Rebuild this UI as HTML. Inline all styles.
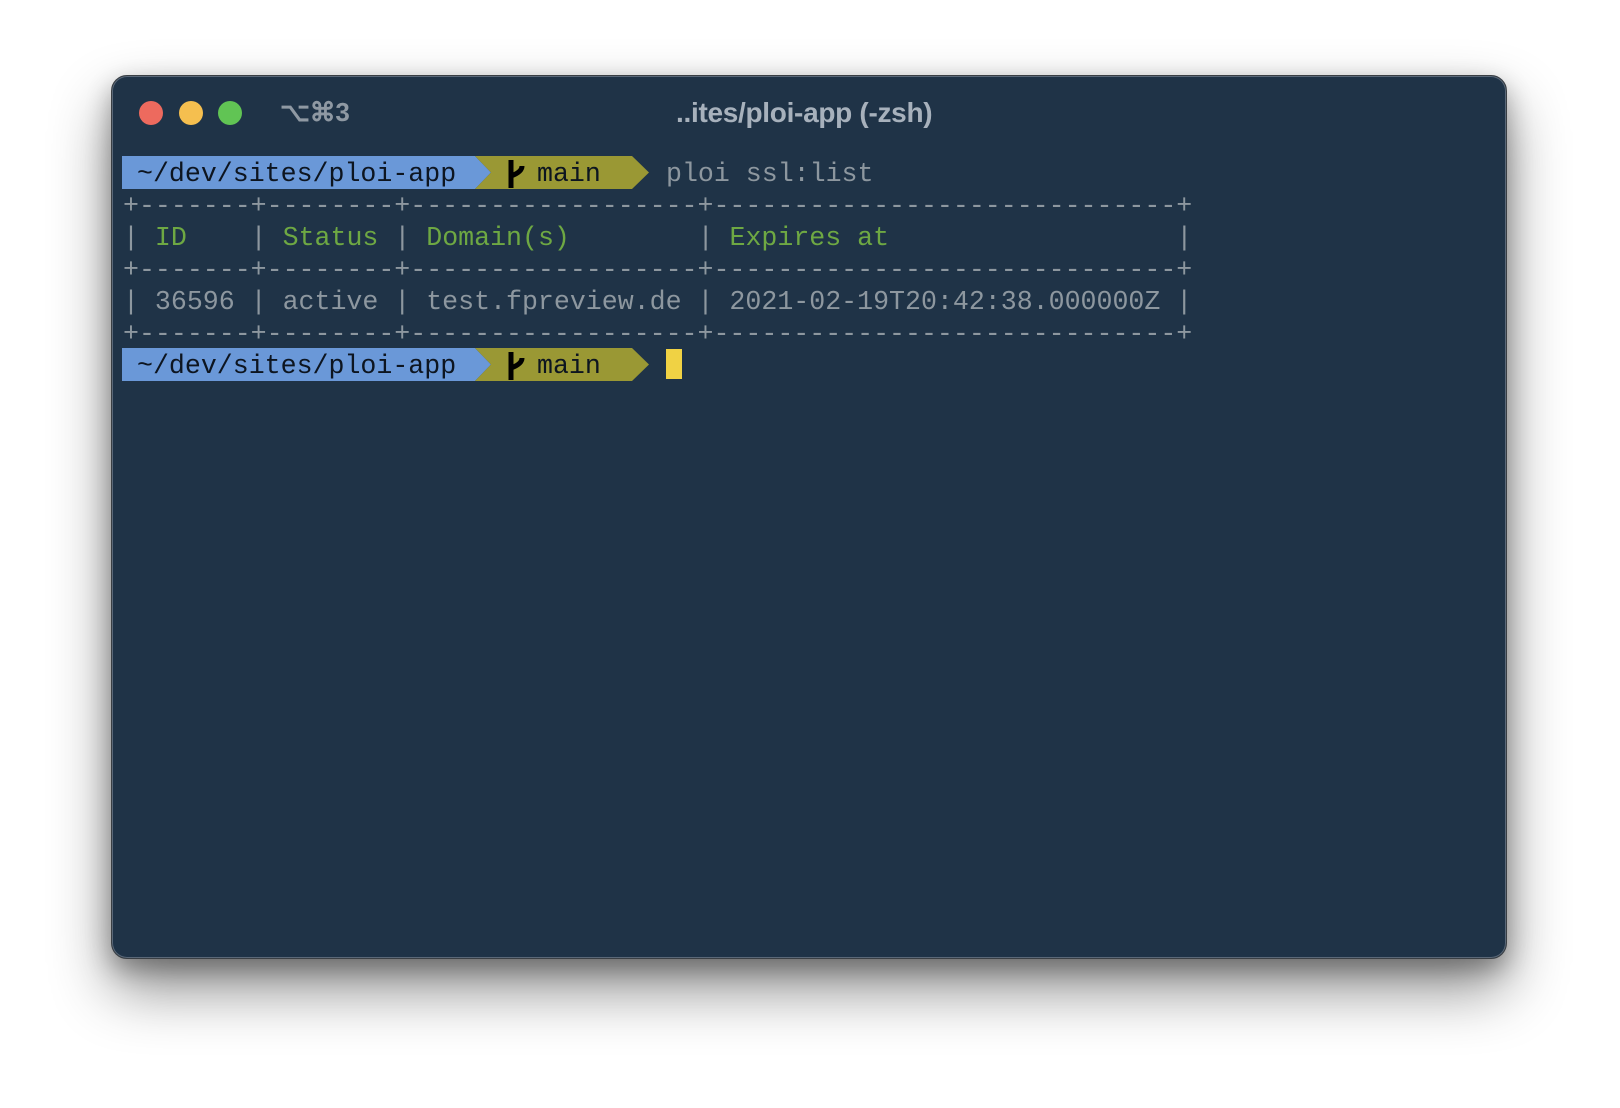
<!DOCTYPE html>
<html><head><style>
html,body{margin:0;padding:0;background:#fff;width:1620px;height:1108px;overflow:hidden}
.win{position:absolute;left:111px;top:75px;width:1396px;height:884px;background:#1f3347;border-radius:16px;border:1px solid #3a3f44;box-shadow:inset 0 0 0 1px #5a6878,0 30px 60px rgba(0,0,0,.45),0 10px 25px rgba(0,0,0,.3);box-sizing:border-box}
.dot{position:absolute;top:101px;width:24px;height:24px;border-radius:50%}
.t{position:absolute;font-family:"Liberation Sans",sans-serif;font-weight:bold;color:#a7b1bc;font-size:28px;top:97px;letter-spacing:-0.3px}
.mono{position:absolute;font-family:"Liberation Mono",monospace;font-size:26.6px;line-height:32px;white-space:pre;color:#8d979f}
.g{color:#6ea843}
</style></head><body>
<div class="win"></div>
<div class="dot" style="left:139px;background:#ed6a5e"></div>
<div class="dot" style="left:179px;background:#f5bf4f"></div>
<div class="dot" style="left:218px;background:#61c454"></div>
<div class="t" style="left:280px;color:#8f99a3;font-size:26px">⌥⌘3</div>
<div class="t" style="left:676px">..ites/ploi-app (-zsh)</div>

<svg style="position:absolute;left:0;top:0" width="1620" height="1108">
<polygon points="122,156 475,156 491,172.5 475,189 122,189" fill="#6a98d8"/>
<polygon points="475,156 632,156 649,172.5 632,189 475,189 491,172.5" fill="#9a9834"/>
<g transform="translate(0,192)">
<polygon points="122,156 475,156 491,172.5 475,189 122,189" fill="#6a98d8"/>
<polygon points="475,156 632,156 649,172.5 632,189 475,189 491,172.5" fill="#9a9834"/>
</g>
<path d="M511 160 V188 M511 176 Q522 172 522 166" stroke="#000" stroke-width="5" fill="none"/>
<path d="M511 352 V380 M511 368 Q522 364 522 358" stroke="#000" stroke-width="5" fill="none"/>
<rect x="666" y="349" width="16" height="30" fill="#f0d244"/>
</svg>

<div class="mono" style="left:137px;top:158px;color:#0d1520">~/dev/sites/ploi-app</div>
<div class="mono" style="left:537px;top:158px;color:#0d1520">main</div>
<div class="mono" style="left:666px;top:158px">ploi ssl:list</div>
<div class="mono" style="left:137px;top:350px;color:#0d1520">~/dev/sites/ploi-app</div>
<div class="mono" style="left:537px;top:350px;color:#0d1520">main</div>

<div class="mono" style="left:123px;top:190px">+-------+--------+------------------+-----------------------------+
| <span class="g">ID</span>    | <span class="g">Status</span> | <span class="g">Domain(s)</span>        | <span class="g">Expires at</span>                  |
+-------+--------+------------------+-----------------------------+
| 36596 | active | test.fpreview.de | 2021-02-19T20:42:38.000000Z |
+-------+--------+------------------+-----------------------------+</div>
</body></html>
